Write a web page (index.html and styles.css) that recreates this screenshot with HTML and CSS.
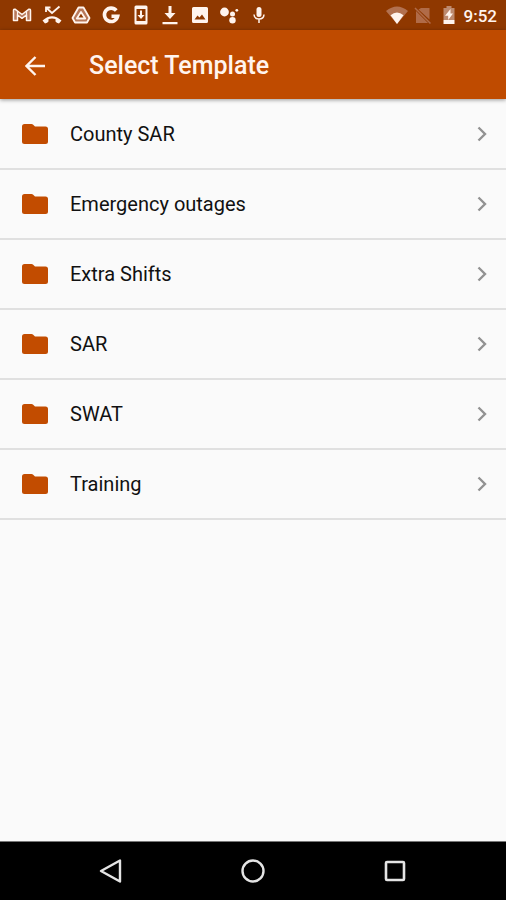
FILE: index.html
```html
<!DOCTYPE html>
<html lang="en">
<head>
<meta charset="utf-8">
<meta name="viewport" content="width=device-width, initial-scale=1">
<title>Select Template</title>
<link rel="stylesheet" href="styles.css">
</head>
<body>
<svg class="defs" aria-hidden="true">
  <symbol id="folder" viewBox="0 0 26 20"><path d="M2.500 0H9.500Q10.500 0 11.200.7L13 2.500H23.500Q26 2.500 26 5V17.500Q26 20 23.500 20H2.500Q0 20 0 17.500V2.500Q0 0 2.500 0Z"/></symbol>
  <symbol id="chevron" viewBox="0 0 10 16"><path d="M1.500 1.500L8 8L1.500 14.500" fill="none" stroke="currentColor" stroke-width="2.400"/></symbol>
</svg>
<div class="status-bar">
  <div class="notifications">
    <svg viewBox="0 0 20 20"><path d="M1.500 15.500V5.500Q1.500 4 3 4.200L10 9.500L17 4.200Q18.500 4 18.500 5.500V15.500H14.500V10L10 13.300L5.500 10V15.500Z" fill="#b8785a" stroke="currentColor" stroke-width="1.500" stroke-linejoin="round"/><path d="M5.500 6V10M14.500 6V10" stroke="currentColor" stroke-width="1.200"/></svg>
    <svg viewBox="0 0 20 20"><path d="M4 7V2.500H8.500M4.500 3L10 8L17.500 1.500" fill="none" stroke="currentColor" stroke-width="1.800"/><path d="M.5 15.500Q10 7 19.500 15.500L17 18.500Q14.500 17.800 13.500 16.500V14Q10 13 6.500 14V16.500Q5.500 17.800 3 18.500Z" fill="currentColor"/></svg>
    <svg viewBox="0 0 20 20"><path d="M7.500 2.500H12.500L18.500 13L16 17.500H4L1.500 13ZM10 7L5.800 13.500H14.200Z" fill="#b8785a" stroke="currentColor" stroke-width="1.800" stroke-linejoin="round" fill-rule="evenodd"/></svg>
    <svg viewBox="0 0 20 20"><path d="M15.300 5.500A6.700 6.700 0 1 0 16.700 11.200H10.500" fill="none" stroke="currentColor" stroke-width="3.600"/></svg>
    <svg viewBox="0 0 20 20"><path d="M5 .5H15Q16.500 .5 16.500 2V18Q16.500 19.500 15 19.500H5Q3.500 19.500 3.500 18V2Q3.500 .5 5 .5ZM5.500 4V16H14.500V4Z" fill="currentColor" fill-rule="evenodd"/><path d="M9 5.500H11V10H13.500L10 14L6.500 10H9Z" fill="currentColor"/></svg>
    <svg viewBox="0 0 20 20"><path d="M8.500 1H11.500V8H15.500L10 14L4.500 8H8.500ZM2.500 17H17.500V19.300H2.500Z" fill="currentColor"/></svg>
    <svg viewBox="0 0 20 20"><path d="M3.500 2H16.500Q18 2 18 3.500V16.500Q18 18 16.500 18H3.500Q2 18 2 16.500V3.500Q2 2 3.500 2ZM4.500 14.500H15.500L12 9.500L9.500 12.500L7.500 10.500Z" fill="currentColor" fill-rule="evenodd"/></svg>
    <svg viewBox="0 0 20 20"><g fill="currentColor"><circle cx="5.500" cy="7" r="4.400"/><circle cx="13.500" cy="9" r="2.500"/><circle cx="13.500" cy="15.300" r="3.200"/><circle cx="17.800" cy="5.300" r="1.400"/></g></svg>
    <svg viewBox="0 0 20 20"><rect x="7.500" y="2" width="5" height="10" rx="2.500" fill="currentColor"/><path d="M5 9.500Q5.200 14 10 14T15 9.500M10 14V18" fill="none" stroke="currentColor" stroke-width="1.500"/></svg>
  </div>
  <div class="system">
    <svg viewBox="0 0 22 20"><path d="M0 6Q11-3 22 6L11 19Z" fill="#b27150"/><path d="M4.500 10.200Q11 5 17.500 10.200L11 19Z" fill="currentColor"/></svg>
    <svg viewBox="0 0 22 20"><path d="M9 3H17.500V14.500L6.500 4.500ZM4 6L16 18H4Z" fill="#b06b48"/><path d="M3 3L18.500 18.500" stroke="#b06b48" stroke-width="1.500"/></svg>
    <svg viewBox="0 0 22 20"><path d="M8.500 1H13.500V3H16.500V15H5.500V3H8.500Z" fill="#bd8a6f"/><path d="M5.500 15H16.500V19H5.500ZM12.500 4L7 10.800H10.200V15L15 8.500H12.500Z" fill="currentColor"/></svg>
    <time>9:52</time>
  </div>
</div>
<header class="app-bar">
  <button class="back" aria-label="Back"><svg viewBox="0 0 20 20"><path d="M20 10H2M10.500 1L1.500 10L10.500 19" fill="none" stroke="currentColor" stroke-width="2.400"/></svg></button>
  <h1>Select Template</h1>
</header>
<main>
  <ul class="templates">
    <li><a href="#"><svg class="folder"><use href="#folder"/></svg><span>County SAR</span><svg class="chevron"><use href="#chevron"/></svg></a></li>
    <li><a href="#"><svg class="folder"><use href="#folder"/></svg><span>Emergency outages</span><svg class="chevron"><use href="#chevron"/></svg></a></li>
    <li><a href="#"><svg class="folder"><use href="#folder"/></svg><span>Extra Shifts</span><svg class="chevron"><use href="#chevron"/></svg></a></li>
    <li><a href="#"><svg class="folder"><use href="#folder"/></svg><span>SAR</span><svg class="chevron"><use href="#chevron"/></svg></a></li>
    <li><a href="#"><svg class="folder"><use href="#folder"/></svg><span>SWAT</span><svg class="chevron"><use href="#chevron"/></svg></a></li>
    <li><a href="#"><svg class="folder"><use href="#folder"/></svg><span>Training</span><svg class="chevron"><use href="#chevron"/></svg></a></li>
  </ul>
</main>
<nav class="nav-bar">
  <button aria-label="Back"><svg viewBox="0 0 24 24"><path d="M21 1.500V22.500L2 12Z" fill="none" stroke="currentColor" stroke-width="2.400" stroke-linejoin="round"/></svg></button>
  <button aria-label="Home"><svg viewBox="0 0 24 24"><circle cx="12" cy="12" r="10.500" fill="none" stroke="currentColor" stroke-width="2.400"/></svg></button>
  <button aria-label="Recent apps"><svg viewBox="0 0 24 24"><rect x="3" y="3" width="18" height="18" rx="1" fill="none" stroke="currentColor" stroke-width="2.600"/></svg></button>
</nav>
</body>
</html>
```

FILE: styles.css
```css
* {
  box-sizing: border-box;
}

body {
  margin: 0;
  min-height: 100vh;
  display: flex;
  flex-direction: column;
  background: #fafafa;
  color: #111;
  font-family: Roboto, "Liberation Sans", sans-serif;
}

button {
  display: flex;
  align-items: center;
  justify-content: center;
  padding: 0;
  border: 0;
  background: none;
  color: inherit;
}

.defs {
  display: none;
}

.status-bar {
  display: flex;
  align-items: center;
  justify-content: space-between;
  height: 30px;
  padding: 0 9px 0 12px;
  background: #8f3800;
  color: #fff4ee;
}

.notifications {
  display: flex;
  justify-content: space-between;
  flex: 0 1 257px;
}

.notifications svg {
  width: 20px;
  height: 20px;
}

.system {
  display: flex;
  align-items: center;
  gap: 4px;
}

.system svg {
  width: 22px;
  height: 20px;
}

.system time {
  padding-top: 2px;
  font-size: 17px;
  font-weight: 500;
  line-height: 24px;
}

.app-bar {
  display: flex;
  align-items: center;
  gap: 44px;
  height: 69px;
  padding: 2px 25px 0;
  background: #bf4b00;
  color: #fff4ee;
  box-shadow: 0 1px 4px rgba(0, 0, 0, 0.4);
}

.back svg {
  width: 20px;
  height: 20px;
}

.app-bar h1 {
  margin: 0;
  font-size: 25px;
  font-weight: 500;
  line-height: 32px;
}

main {
  flex: 1;
}

.templates {
  margin: 0;
  padding: 1px 0 0;
  list-style: none;
}

.templates a {
  display: flex;
  align-items: center;
  gap: 22px;
  height: 70px;
  padding: 0 19px 0 22px;
  border-bottom: 2px solid #e0e0e0;
  color: inherit;
  font-size: 20px;
  line-height: 28px;
  text-decoration: none;
}

.templates span {
  flex: 1;
}

.folder {
  width: 26px;
  height: 20px;
  fill: #c24c00;
}

.chevron {
  width: 10px;
  height: 16px;
  color: #929292;
}

.nav-bar {
  display: grid;
  grid-template-columns: repeat(3, 1fr);
  height: 59px;
  padding: 0 40px;
  border-top: 1px solid #777;
  background: #000;
  color: #e4e4e4;
}

.nav-bar svg {
  width: 24px;
  height: 24px;
}
```
